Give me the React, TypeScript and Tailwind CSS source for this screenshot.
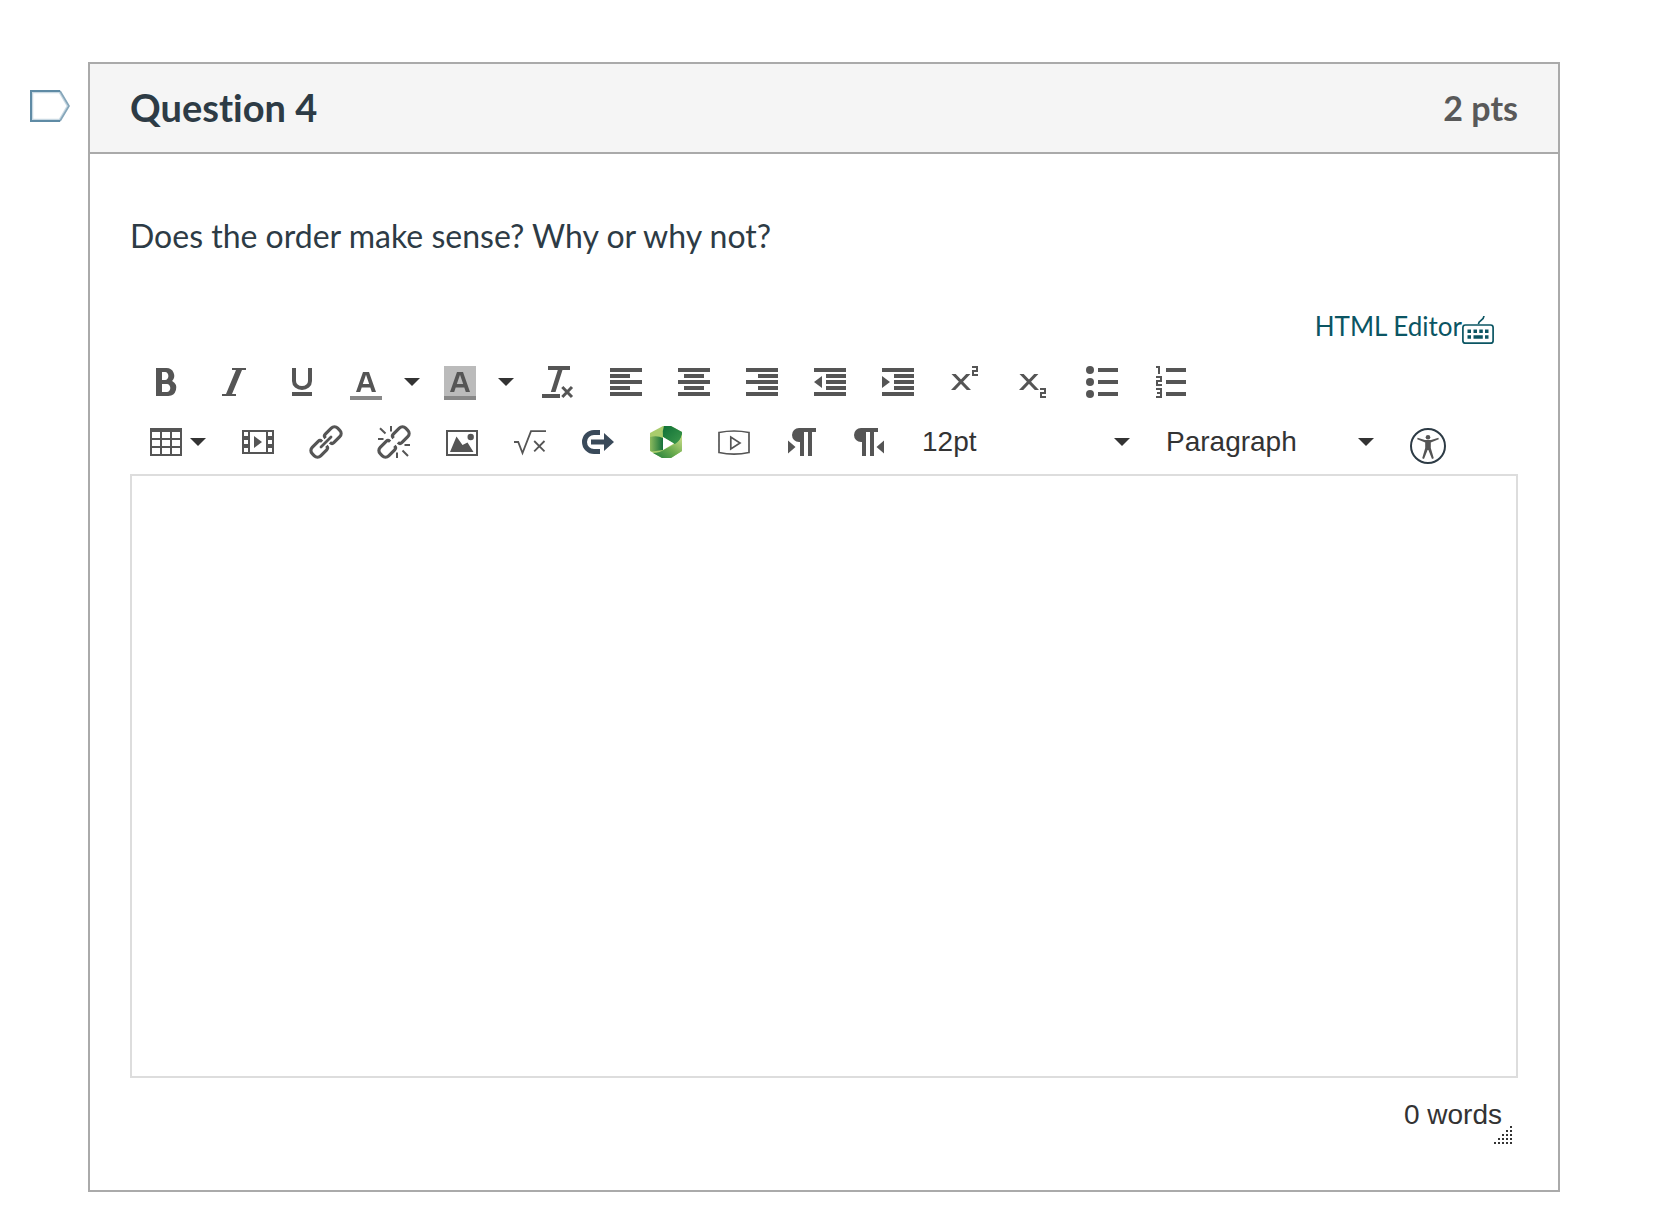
import { useState, type ReactNode } from "react";

const INK = "#555555";

function Icon({ children, color = INK }: { children: ReactNode; color?: string }) {
  return (
    <svg viewBox="0 0 32 32" className="size-8 shrink-0 overflow-visible" fill={color} aria-hidden="true">
      {children}
    </svg>
  );
}

function Caret() {
  return (
    <svg viewBox="0 0 16 8" className="h-2 w-4 shrink-0" fill="#333333" aria-hidden="true">
      <path d="M0 0h16L8 8z" />
    </svg>
  );
}

function ToolButton({ label, children }: { label: string; children: ReactNode }) {
  return (
    <button type="button" aria-label={label} title={label} className="flex h-[60px] w-[68px] items-center justify-center">
      {children}
    </button>
  );
}

function SplitButton({ label, children }: { label: string; children: ReactNode }) {
  return (
    <div className="flex h-[60px] w-[94px] items-center">
      <button type="button" aria-label={label} title={label} className="flex h-full items-center pr-3 pl-3.5">
        {children}
      </button>
      <button type="button" aria-label={`${label} options`} className="flex h-full items-center px-2.5">
        <Caret />
      </button>
    </div>
  );
}

function ToolSelect({ label, options }: { label: string; options: string[] }) {
  return (
    <div className="relative h-[60px] w-[244px]">
      <select
        aria-label={label}
        className="h-full w-full appearance-none bg-transparent px-[18px] text-[28px] text-[#333333]"
      >
        {options.map((o) => (
          <option key={o}>{o}</option>
        ))}
      </select>
      <span className="pointer-events-none absolute inset-y-0 right-[18px] flex items-center">
        <Caret />
      </span>
    </div>
  );
}

const letterA = "M6 26 13 6h6l7 20h-4.2l-1.5-4.6h-8.6L10.2 26zM12.8 18h6.4L16 8.8z";
const crossGlyph = "M1.500 8h4.200L21 24h-4.200zM16.200 8h4.200L5.200 24H1z";

function LinkHalves() {
  return (
    <g fill="none" stroke={INK} strokeWidth="3.2" transform="rotate(-45 16 16)">
      <path d="M13.500 13v-.5a2.500 2.500 0 0 0-2.500-2.500H2.500a4.500 4.500 0 0 0-4.500 4.500v3a4.500 4.500 0 0 0 4.500 4.500H11a2.500 2.500 0 0 0 2.500-2.500V19" />
      <path d="M18.500 13v-.5a2.500 2.500 0 0 1 2.500-2.500h8.500a4.500 4.500 0 0 1 4.500 4.500v3a4.500 4.500 0 0 1-4.500 4.500H21a2.500 2.500 0 0 1-2.500-2.500V19" />
    </g>
  );
}

export default function App() {
  const [text, setText] = useState("");
  const words = text.trim() ? text.trim().split(/\s+/).length : 0;

  return (
    <main className="flex min-h-screen items-start gap-[18px] bg-white pt-[62px] pr-[106px] pb-[30px] pl-[30px] font-['Lato',sans-serif] text-[#2d3b45] [font-variant-ligatures:none]">
      <button type="button" aria-label="Flag question" className="mt-7 shrink-0">
        <svg viewBox="0 0 40 32" className="h-8 w-10" fill="none" aria-hidden="true">
          <path d="M2.5 2.5h27L37.5 16l-8 13.5h-27z" stroke="#c9d9e3" strokeWidth="1.5" />
          <path d="M30 1 39 16 30 31" stroke="#86a6ba" strokeWidth="1.8" />
          <path d="M30 1H1v30h29" stroke="#5f8ba5" strokeWidth="2" />
        </svg>
      </button>

      <section className="min-w-0 flex-1 border-2 border-[#aaaaaa]">
        <header className="flex h-[90px] items-center justify-between border-b-2 border-[#aaaaaa] bg-[#f5f5f5] px-10 pb-0.5">
          <h1 className="text-[38px] leading-[48px] font-bold">Question 4</h1>
          <span className="pt-0.5 text-[34px] leading-[48px] font-bold text-[#595959]">2 pts</span>
        </header>

        <div className="px-10 pb-[34px]">
          <p className="pt-[58px] text-[32px] leading-[48px]">Does the order make sense? Why or why not?</p>

          <div className="mt-11 mb-1 flex h-11 items-center justify-end pr-6 text-[#0b5563]">
            <a href="#html" className="text-[26px] leading-9">
              HTML Editor
            </a>
            <button type="button" aria-label="Keyboard shortcuts" className="pt-2">
              <svg viewBox="0 0 32 28" className="h-7 w-8" fill="currentColor" aria-hidden="true">
                <rect x="0.9" y="9" width="30.2" height="18.2" rx="2.5" fill="none" stroke="currentColor" strokeWidth="1.7" />
                <path d="M16.5 8c0-4.5 5-2.5 5.500-8" fill="none" stroke="currentColor" strokeWidth="1.7" />
                <path d="M5.5 13.5h3.5V17H5.5zM11.5 13.5H15V17h-3.5zM17.3 13.5h3.5V17h-3.5zM23 13.5h3.5V17H23zM5.5 19.2h3.5v3.5H5.5zM11.5 19.2h9.3v3.5h-9.3zM23 19.2h3.5v3.5H23z" />
              </svg>
            </button>
          </div>

          <div role="toolbar" aria-label="Formatting" className="pb-0.5 font-['Liberation_Sans',Arial,sans-serif]">
            <div className="flex flex-wrap pl-0.5">
              <ToolButton label="Bold">
                <Icon>
                  <path
                    fillRule="evenodd"
                    d="M6 2h10.5a7.7 7.7 0 0 1 5.600 13A8 8 0 0 1 18 30H6zM12 6v8h3.2c1.8 0 3.2-1.8 3.2-4s-1.4-4-3.2-4zM12 18v8h5c1.8 0 3.3-1.8 3.3-4S18.8 18 17 18z"
                  />
                </Icon>
              </ToolButton>
              <ToolButton label="Italic">
                <Icon>
                  <path d="M28 2v2h-4L14 28h4v2H4v-2h4L18 4h-4V2z" />
                </Icon>
              </ToolButton>
              <ToolButton label="Underline">
                <Icon>
                  <path d="M8 2v13c0 4 3.600 7 8 7s8-3 8-7V2" fill="none" stroke={INK} strokeWidth="4" />
                  <path d="M6 26h20v4H6z" />
                </Icon>
              </ToolButton>
              <SplitButton label="Text color">
                <Icon>
                  <path fillRule="evenodd" d={letterA} />
                  <path d="M0 30h32v4H0z" fill="#888888" />
                </Icon>
              </SplitButton>
              <SplitButton label="Background color">
                <Icon>
                  <path d="M0 0h32v30H0z" fill="#bbbbbb" />
                  <path fillRule="evenodd" d={letterA} />
                  <path d="M0 30h32v4H0z" fill="#888888" />
                </Icon>
              </SplitButton>
              <ToolButton label="Clear formatting">
                <Icon>
                  <path d="M6 0h22v4h-7.500L13.500 26H8.800L15.800 4H6zM0 28h18v4H0z" />
                  <path d="M20.300 21 30 31M30 21l-9.700 10" stroke={INK} strokeWidth="3" />
                </Icon>
              </ToolButton>
              <ToolButton label="Align left">
                <Icon>
                  <path d="M0 2h32v4H0zM0 8h20v4H0zM0 14h32v4H0zM0 20h20v4H0zM0 26h32v4H0z" />
                </Icon>
              </ToolButton>
              <ToolButton label="Align center">
                <Icon>
                  <path d="M0 2h32v4H0zM6 8h20v4H6zM0 14h32v4H0zM6 20h20v4H6zM0 26h32v4H0z" />
                </Icon>
              </ToolButton>
              <ToolButton label="Align right">
                <Icon>
                  <path d="M0 2h32v4H0zM12 8h20v4H12zM0 14h32v4H0zM12 20h20v4H12zM0 26h32v4H0z" />
                </Icon>
              </ToolButton>
              <ToolButton label="Decrease indent">
                <Icon>
                  <path d="M0 2h32v4H0zM12 8h20v4H12zM12 14h20v4H12zM12 20h20v4H12zM0 26h32v4H0zM8 10v12L0 16z" />
                </Icon>
              </ToolButton>
              <ToolButton label="Increase indent">
                <Icon>
                  <path d="M0 2h32v4H0zM12 8h20v4H12zM12 14h20v4H12zM12 20h20v4H12zM0 26h32v4H0zM0 10v12l8-6z" />
                </Icon>
              </ToolButton>
              <ToolButton label="Superscript">
                <Icon>
                  <path d={crossGlyph} />
                  <path d="M22 1h5v4h-4v4h5" fill="none" stroke={INK} strokeWidth="2" />
                </Icon>
              </ToolButton>
              <ToolButton label="Subscript">
                <Icon>
                  <path d={crossGlyph} />
                  <path d="M22 23h5v4h-4v4h5" fill="none" stroke={INK} strokeWidth="2" />
                </Icon>
              </ToolButton>
              <ToolButton label="Bullet list">
                <Icon>
                  <path d="M12 2h20v4H12zM12 14h20v4H12zM12 26h20v4H12z" />
                  <circle cx="4" cy="4" r="4" />
                  <circle cx="4" cy="16" r="4" />
                  <circle cx="4" cy="28" r="4" />
                </Icon>
              </ToolButton>
              <ToolButton label="Numbered list">
                <Icon>
                  <path d="M12 2h20v4H12zM12 14h20v4H12zM12 26h20v4H12z" />
                  <path d="M2 1h3v7M2 11h5v4H3v4h5M2 23h5v8H2M3 27h4" fill="none" stroke={INK} strokeWidth="2" />
                </Icon>
              </ToolButton>
            </div>

            <div className="flex flex-wrap pl-0.5">
              <button type="button" aria-label="Table" className="flex h-[60px] w-[92px] items-center gap-2 pl-[18px]">
                <Icon>
                  <path
                    fillRule="evenodd"
                    d="M0 2h32v28H0zM2 6v6h8V6zM12 6v6h8V6zM22 6v6h8V6zM2 14v6h8v-6zM12 14v6h8v-6zM22 14v6h8v-6zM2 22v6h8v-6zM12 22v6h8v-6zM22 22v6h8v-6z"
                  />
                </Icon>
                <Caret />
              </button>
              <ToolButton label="Media">
                <Icon>
                  <path
                    fillRule="evenodd"
                    d="M0 4h32v24H0zM2 6v4h4V6zM2 14v4h4v-4zM2 22v4h4v-4zM8 6v20h16V6zM26 6v4h4V6zM26 14v4h4v-4zM26 22v4h4v-4zM12 10l8 6-8 6z"
                  />
                </Icon>
              </ToolButton>
              <ToolButton label="Insert link">
                <Icon>
                  <LinkHalves />
                  <path d="M11 21 21 11" stroke={INK} strokeWidth="2.800" strokeLinecap="round" />
                </Icon>
              </ToolButton>
              <ToolButton label="Remove link">
                <Icon>
                  <LinkHalves />
                  <path
                    d="M2 2.3 7.5 7.5M13 0v5.500M0 13h5.500M19 26.500V32M26.500 19H32M24.500 24.500 30 30"
                    stroke={INK}
                    strokeWidth="2"
                  />
                </Icon>
              </ToolButton>
              <ToolButton label="Image">
                <Icon>
                  <path fillRule="evenodd" d="M0 4h32v26H0zM2 6v22h28V6z" />
                  <path d="M4 26 10.500 10.500 16.500 19l5-2.500L27.500 26z" />
                  <circle cx="24.700" cy="11" r="3.200" />
                </Icon>
              </ToolButton>
              <ToolButton label="Equation">
                <Icon>
                  <path d="M0 16h4.200L8.500 27 17 5.200H32M20.200 15l10.300 10.300M30.500 15 20.200 25.300" fill="none" stroke={INK} strokeWidth="1.800" />
                </Icon>
              </ToolButton>
              <ToolButton label="External tool">
                <Icon color="#3a4a5a">
                  <path d="M18 6.500h-6a9.500 9.500 0 0 0 0 19h6" fill="none" stroke="#3a4a5a" strokeWidth="5" />
                  <path d="M9 13.500h13V7l10 9-10 9v-6.500H9z" />
                </Icon>
              </ToolButton>
              <ToolButton label="Panopto">
                <Icon>
                  <defs>
                    <linearGradient id="pLeft" x1="0" y1="0" x2="1" y2="0">
                      <stop offset="0" stopColor="#8cba5e" />
                      <stop offset="1" stopColor="#14703a" />
                    </linearGradient>
                    <linearGradient id="pRight" x1="0" y1="0" x2="1" y2="1">
                      <stop offset="0" stopColor="#0f7038" />
                      <stop offset="1" stopColor="#3f9a4c" />
                    </linearGradient>
                    <linearGradient id="pLow" x1="0" y1="1" x2="1" y2="0">
                      <stop offset="0" stopColor="#1f7d3c" />
                      <stop offset="0.5" stopColor="#6fae50" />
                      <stop offset="1" stopColor="#d0e08e" />
                    </linearGradient>
                  </defs>
                  <path d="M0 7 13 0h8l11 6v19l-11 7h-9L0 25z" fill="#a9cc6c" />
                  <path d="M0 11q7-2 13 1v12L2 25.500l-2-1z" fill="url(#pLeft)" />
                  <path d="M14 0h7l11 6v2q-2 8-6 11L13 11q-1-6 1-11z" fill="url(#pRight)" />
                  <path d="M32 9v16l-11 7h-9L3 27q7 0 12-4l10-5q5-3 7-9z" fill="url(#pLow)" />
                  <path d="M13 11v13l11-6.500z" fill="#ffffff" />
                </Icon>
              </ToolButton>
              <ToolButton label="Studio video">
                <Icon>
                  <path d="M1 6.500Q16 3.500 31 6.500v20Q16 29.800 1 26.500zM12.800 11v12L22 17z" fill="none" stroke={INK} strokeWidth="1.700" />
                </Icon>
              </ToolButton>
              <ToolButton label="Left to right">
                <Icon>
                  <path d="M13 2h17v4h-4v24h-4V6h-4v24h-4V16h-1a7 7 0 0 1 0-14zM2 14.500v13L9.500 21z" />
                </Icon>
              </ToolButton>
              <ToolButton label="Right to left">
                <Icon>
                  <path d="M7 2h17v4h-4v24h-4V6h-4v24H8V16H7A7 7 0 0 1 7 2zM30 14.500v13L22.500 21z" />
                </Icon>
              </ToolButton>
              <ToolSelect label="Font size" options={["12pt", "8pt", "10pt", "14pt", "18pt", "24pt", "36pt"]} />
              <ToolSelect label="Block format" options={["Paragraph", "Heading 2", "Heading 3", "Heading 4", "Preformatted"]} />
              <button type="button" aria-label="Check accessibility" className="flex h-[60px] items-center px-[18px] pt-2">
                <svg viewBox="0 0 36 36" className="size-9" fill={INK} aria-hidden="true">
                  <circle cx="18" cy="18" r="17" fill="none" stroke="#2d3b45" strokeWidth="2" />
                  <circle cx="18" cy="9.300" r="2.300" />
                  <path d="M7.600 9.800 15 12h6l7.400-2.200.4 1.400-8 3.300V20l3 10.300-1.800.6L18.400 22h-.8L14 30.900l-1.800-.6 3-10.300v-5.500l-8-3.300z" />
                </svg>
              </button>
            </div>
          </div>

          <textarea
            aria-label="Answer"
            value={text}
            onChange={(e) => setText(e.target.value)}
            className="block h-[604px] w-full resize-none border-2 border-[#dddddd] p-4 text-2xl outline-none"
          />

          <div className="relative flex h-[78px] items-center justify-end pr-4 pb-1 font-['Liberation_Sans',Arial,sans-serif] text-[28px] leading-8 text-[#333333]">
            {words} words
            <svg viewBox="0 0 18 18" className="absolute right-1.5 bottom-3 size-[18px]" fill="#333333" aria-hidden="true">
              <path d="M16 0h2v2h-2zM12 4h2v2h-2zM16 4h2v2h-2zM8 8h2v2H8zM12 8h2v2h-2zM16 8h2v2h-2zM4 12h2v2H4zM8 12h2v2H8zM12 12h2v2h-2zM16 12h2v2h-2zM0 16h2v2H0zM4 16h2v2H4zM8 16h2v2H8zM12 16h2v2h-2zM16 16h2v2h-2z" />
            </svg>
          </div>
        </div>
      </section>
    </main>
  );
}
